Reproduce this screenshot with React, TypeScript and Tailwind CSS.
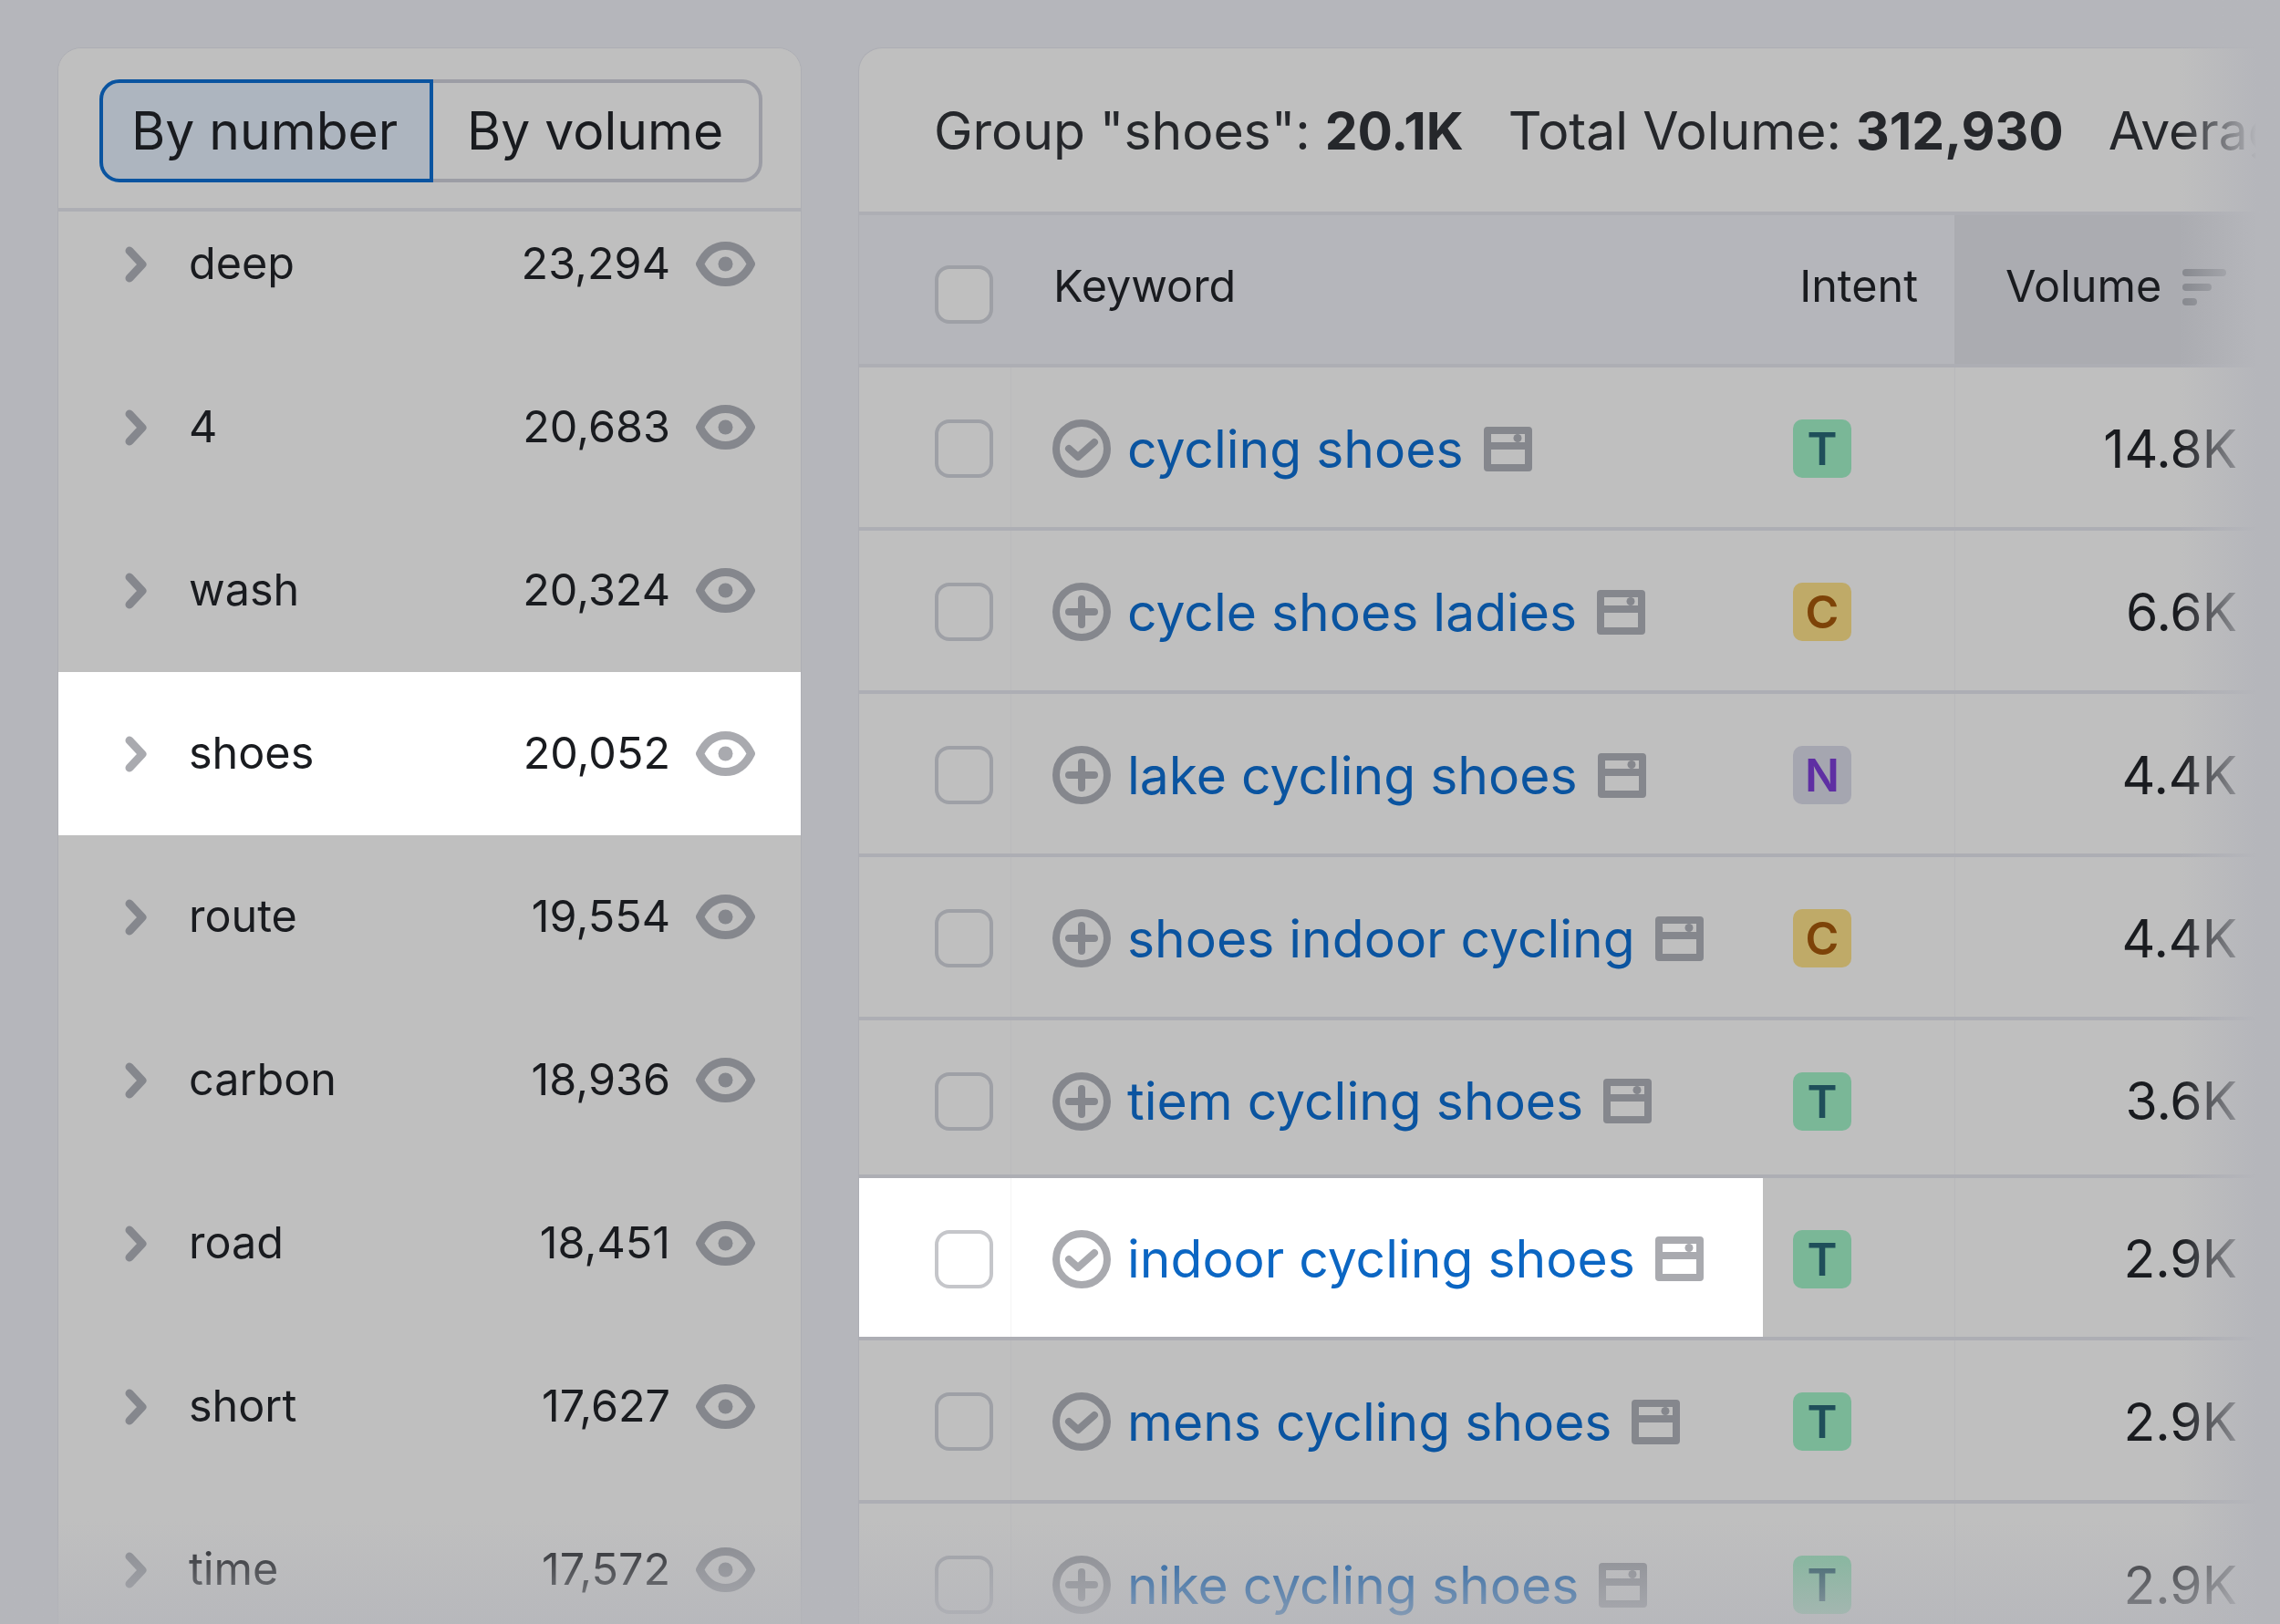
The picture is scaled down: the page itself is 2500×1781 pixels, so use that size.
const topics = [
  { name: "deep", count: "23,294" },
  { name: "4", count: "20,683" },
  { name: "wash", count: "20,324" },
  { name: "shoes", count: "20,052", active: true },
  { name: "route", count: "19,554" },
  { name: "carbon", count: "18,936" },
  { name: "road", count: "18,451" },
  { name: "short", count: "17,627" },
  { name: "time", count: "17,572" },
];

const keywords = [
  { kw: "cycling shoes", status: "check", intent: "T", volume: "14.8K", h: "h-[179px]", pt: "pt-[3px]" },
  { kw: "cycle shoes ladies", status: "plus", intent: "C", volume: "6.6K", h: "h-[179px]", pt: "pt-[3px]" },
  { kw: "lake cycling shoes", status: "plus", intent: "N", volume: "4.4K", h: "h-[179px]", pt: "pt-[3px]" },
  { kw: "shoes indoor cycling", status: "plus", intent: "C", volume: "4.4K", h: "h-[179px]", pt: "pt-[3px]" },
  { kw: "tiem cycling shoes", status: "plus", intent: "T", volume: "3.6K", h: "h-[173px]", pt: "pt-[8px]" },
  { kw: "indoor cycling shoes", status: "check", intent: "T", volume: "2.9K", h: "h-[178px]", pt: "pt-[3px]", active: true },
  { kw: "mens cycling shoes", status: "check", intent: "T", volume: "2.9K", h: "h-[179px]", pt: "pt-[3px]" },
  { kw: "nike cycling shoes", status: "plus", intent: "T", volume: "2.9K", h: "h-[179px]", pt: "pt-[3px]" },
];

function Chevron({ className }: { className: string }) {
  return (
    <svg width="24" height="40" viewBox="0 0 24 40" fill="none" className={`shrink-0 ${className}`}>
      <path d="M5 5 L19 20 L5 35" stroke="currentColor" strokeWidth="9" strokeLinecap="round" strokeLinejoin="round" />
    </svg>
  );
}

function Eye({ className }: { className: string }) {
  return (
    <svg width="65" height="49" viewBox="0 0 65 49" fill="none" className={className}>
      <path d="M4.5 24.5 C11 11 21 4.5 32.5 4.5 C44 4.5 54 11 60.5 24.5 C54 38 44 44.5 32.5 44.5 C21 44.5 11 38 4.5 24.5 Z" stroke="currentColor" strokeWidth="9" strokeLinejoin="round" />
      <circle cx="32.5" cy="24.5" r="8" fill="currentColor" />
    </svg>
  );
}

function StatusIcon({ type, className }: { type: string; className: string }) {
  return (
    <svg width="64" height="64" viewBox="0 0 64 64" fill="none" className={className}>
      <circle cx="32" cy="32" r="28" stroke="currentColor" strokeWidth="8" />
      {type === "check" ? (
        <path d="M18 32 L28 41 L46 25" stroke="currentColor" strokeWidth="8" strokeLinecap="round" strokeLinejoin="round" />
      ) : (
        <path d="M32 18 V46 M18 32 H46" stroke="currentColor" strokeWidth="8" strokeLinecap="round" />
      )}
    </svg>
  );
}

function SerpIcon({ className }: { className: string }) {
  return (
    <svg width="53" height="49" viewBox="0 0 53 49" fill="none" className={`shrink-0 ${className}`}>
      <path
        fillRule="evenodd"
        clipRule="evenodd"
        fill="currentColor"
        d="M4 0 H49 A4 4 0 0 1 53 4 V45 A4 4 0 0 1 49 49 H4 A4 4 0 0 1 0 45 V4 A4 4 0 0 1 4 0 Z M8 8 V17 H45 V8 Z M8 25 V41 H45 V25 Z"
      />
      <circle cx="37" cy="12.5" r="4.5" fill="currentColor" />
    </svg>
  );
}

function Checkbox({ className }: { className: string }) {
  return <div className={`h-[64px] w-[64px] shrink-0 rounded-[16px] border-[4px] ${className}`} />;
}

const badgeStyles: Record<string, string> = {
  T: "bg-[#7ab797] text-[#1f4f5a]",
  C: "bg-[#bfaa68] text-[#7d4308]",
  N: "bg-[#a5a6b0] text-[#5f2fa3]",
};

export default function App() {
  return (
    <div className="relative h-[1781px] w-[2500px] overflow-hidden bg-[#b5b6bb] font-['Inter',sans-serif] text-[#191b1f]">
      <div className="flex items-start gap-[62px] pl-[63px] pt-[52px]">
        {/* topic list */}
        <div className="h-[1800px] w-[816px] shrink-0 overflow-hidden rounded-t-[26px] border border-[#adaeb4] bg-[#bfbfbf]">
          <div className="relative z-10 h-[179px] border-b-[4px] border-[#adaeb4] bg-[#bfbfbf] pl-[45px] pt-[34px]">
            <div className="flex h-[113px] w-[727px] text-[57px] leading-none">
              <div className="flex w-[366px] items-center rounded-l-[22px] border-[4px] border-[#0a54a0] bg-[#adb5bf] pl-[31px]">By number</div>
              <div className="flex flex-1 items-center rounded-r-[22px] border-y-[4px] border-r-[4px] border-[#9c9da5] pl-[37px]">By volume</div>
            </div>
          </div>
          <div className="-mt-[32px]">
            {topics.map((t) => (
              <div key={t.name} className={`flex h-[179px] items-center pr-[50px] pl-[73px] text-[48.5px] ${t.active ? "bg-white" : ""}`}>
                <Chevron className={t.active ? "text-[#a9aaaf]" : "text-[#85878d]"} />
                <span className="ml-[46px] flex-1">{t.name}</span>
                <span>{t.count}</span>
                <Eye className={`ml-[28px] shrink-0 ${t.active ? "text-[#a9aaaf]" : "text-[#85878d]"}`} />
              </div>
            ))}
          </div>
        </div>

        {/* keyword table */}
        <div className="h-[1800px] flex-1 overflow-hidden rounded-tl-[26px] border-t border-l border-[#adaeb4] bg-[#bfbfbf]">
          <div className="flex h-[179px] items-center whitespace-nowrap pl-[82px] pt-[2px] text-[57px] leading-none text-[#25272b]">
            <span>Group "shoes": <b className="font-bold">20.1K</b></span>
            <span className="ml-[49px]">Total Volume: <b className="font-bold">312,930</b></span>
            <span className="ml-[49px]">Average</span>
          </div>
          <div className="flex h-[171px] items-stretch border-y-[4px] border-[#adaeb4] bg-[#b5b6bb] text-[48.5px]">
            <div className="flex w-[167px] items-center pl-[83px] pt-[10px]">
              <Checkbox className="border-[#9ea0a6] bg-[#bfbfbf]" />
            </div>
            <div className="flex w-[824px] items-center pb-[6px] pl-[46px]">Keyword</div>
            <div className="flex w-[210px] items-center justify-end pb-[6px] pr-[40px]">Intent</div>
            <div className="flex flex-1 items-center bg-[#abacb1] pb-[6px] pl-[56px]">
              <span>Volume</span>
              <div className="ml-[23px] flex flex-col gap-[8px]">
                <div className="h-[8px] w-[48px] rounded-full bg-[#85878d]" />
                <div className="h-[8px] w-[32px] rounded-full bg-[#85878d]" />
                <div className="h-[8px] w-[16px] rounded-full bg-[#85878d]" />
              </div>
            </div>
          </div>
          {keywords.map((k) => (
            <div key={k.kw} className={`flex items-stretch border-b-[4px] border-[#adaeb4] ${k.h}`}>
              <div className={`flex w-[991px] items-stretch ${k.active ? "bg-white" : ""}`}>
                <div className={`flex w-[167px] shrink-0 items-center border-r pl-[83px] ${k.pt} ${k.active ? "border-[#f4f4f4]" : "border-[#bababc]"}`}>
                  <Checkbox className={k.active ? "border-[#c5c6ca]" : "border-[#9ea0a6]"} />
                </div>
                <div className={`flex items-center ${k.pt}`}>
                  <StatusIcon type={k.status} className={`ml-[45px] shrink-0 ${k.active ? "text-[#a9aaaf]" : "text-[#85878d]"}`} />
                  <a className={`ml-[18px] whitespace-nowrap text-[57px] leading-none ${k.active ? "text-[#0b66c3]" : "text-[#0a54a0]"}`}>{k.kw}</a>
                  <SerpIcon className={`ml-[22px] ${k.active ? "text-[#a9aaaf]" : "text-[#85878d]"}`} />
                </div>
              </div>
              <div className={`flex w-[210px] items-center pl-[33px] ${k.pt}`}>
                <div className={`flex h-[64px] w-[64px] items-center justify-center rounded-[10px] text-[50px] leading-none font-semibold ${badgeStyles[k.intent]}`}>
                  {k.intent}
                </div>
              </div>
              <div className={`flex flex-1 items-center justify-end border-l border-[#b8b8bb] pr-[47px] text-[57px] leading-none ${k.pt}`}>
                {k.volume}
              </div>
            </div>
          ))}
        </div>
      </div>

      {/* fades over the edges of the panels */}
      <div className="pointer-events-none absolute inset-y-0 right-0 w-[111px] bg-gradient-to-r from-transparent to-[#b5b6bb] to-[77%]" />
      <div className="pointer-events-none absolute inset-x-0 bottom-0 h-[113px] bg-gradient-to-b from-transparent to-[#b5b6bb] to-[130%]" />
    </div>
  );
}
